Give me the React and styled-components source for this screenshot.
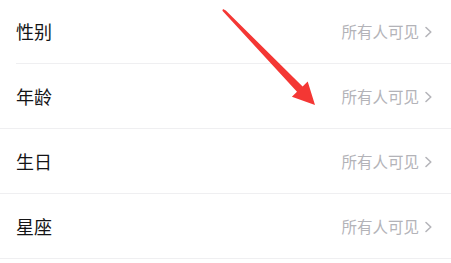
import React from 'react';
import styled, { createGlobalStyle } from 'styled-components';

const GlobalStyle = createGlobalStyle`
    body {
        margin: 0;
        background: #fff;
        font-family: "Noto Sans CJK SC", "Noto Sans", sans-serif;
    }
`;

const rows = ['性别', '年龄', '生日', '星座'];

const App = () => {
    return (
        <StyledPage>
            <GlobalStyle />
            <StyledList>
                {rows.map((label, i) => (
                    <StyledRow key={label} $inset={i === 0}>
                        <StyledLabel>{label}</StyledLabel>
                        <StyledValue>
                            所有人可见
                            <svg width="9" height="12" viewBox="0 0 9 12">
                                <path d="M2 1.5 L6.8 6 L2 10.5" fill="none" stroke="#b5b5ba" strokeWidth="1.6" strokeLinecap="round" strokeLinejoin="round" />
                            </svg>
                        </StyledValue>
                    </StyledRow>
                ))}
            </StyledList>
            <StyledArrow width="451" height="263" viewBox="0 0 451 263">
                <polygon
                    points="223,9 225.8,10.6 302.6,86.4 307.7,81.5 315,105 291.9,96.7 297,91.8 222.4,10.8"
                    fill="#f43734"
                />
            </StyledArrow>
        </StyledPage>
    );
};

const StyledPage = styled.div`
    position: relative;
    width: 451px;
    height: 263px;
    overflow: hidden;
`;

const StyledList = styled.div`
    margin-top: -1px;
`;

const StyledRow = styled.div`
    display: flex;
    align-items: center;
    justify-content: space-between;
    height: 64px;
    margin-bottom: 1px;
    padding: 0 18px 0 16px;
    position: relative;
    &::after {
        content: '';
        position: absolute;
        left: ${(p) => (p.$inset ? '16px' : '0')};
        right: 0;
        bottom: -1px;
        height: 1px;
        background: #efeff1;
    }
`;

const StyledLabel = styled.span`
    font-size: 18px;
    color: #141416;
`;

const StyledValue = styled.span`
    display: flex;
    align-items: center;
    gap: 5px;
    font-size: 15.5px;
    color: #b3b3b8;
    svg {
        margin-top: 1px;
    }
`;

const StyledArrow = styled.svg`
    position: absolute;
    left: 0;
    top: 0;
    pointer-events: none;
`;

export default App;
